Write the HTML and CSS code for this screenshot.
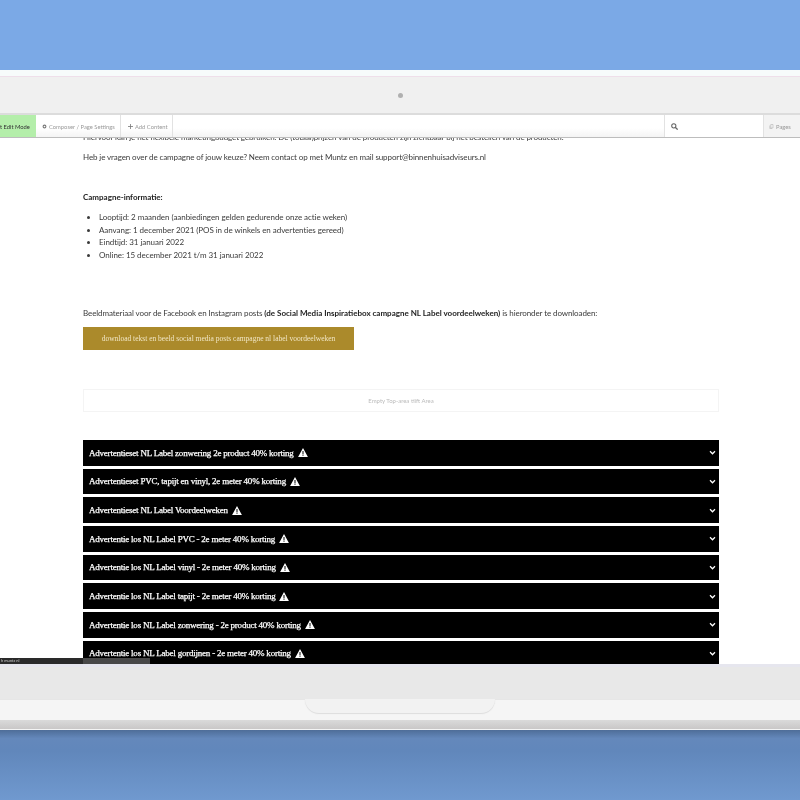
FILE: index.html
```html
<!DOCTYPE html>
<html lang="nl">
<head>
    <meta charset="UTF-8">
    <meta name="viewport" content="width=device-width, initial-scale=1.0">
    <title>Campagne NL Label</title>
    <link rel="stylesheet" href="styles.css">
</head>
<body>
    <svg class="icon-defs" aria-hidden="true">
        <symbol id="warn" viewBox="0 0 12 11"><path fill-rule="evenodd" d="M6 0l6 11H0zM5.400 3.800v3.700h1.200V3.800zM5.400 8.200v1.300h1.200V8.200z" fill="#fff"/></symbol>
        <symbol id="chev" viewBox="0 0 8 6"><path d="M1 1.500l3 3 3-3" fill="none" stroke="#fff" stroke-width="1.500"/></symbol>
    </svg>

    <div class="sky-top"></div>

    <div class="laptop-lid">
        <div class="lid-line"></div>
        <div class="camera-bar"><span class="camera"></span></div>
    </div>

    <div class="screen">
        <div class="toolbar">
            <div class="tool tool-edit">t Edit Mode</div>
            <div class="tool tool-composer">
                <svg class="tool-icon" viewBox="0 0 10 10"><circle cx="5" cy="5" r="2.800" fill="none" stroke="#777" stroke-width="2.200"/></svg>
                Composer / Page Settings
            </div>
            <div class="tool tool-add">
                <svg class="tool-icon" viewBox="0 0 10 10"><path d="M5 0v10M0 5h10" stroke="#777" stroke-width="1.600"/></svg>
                Add Content
            </div>
            <div class="tool-space"></div>
            <div class="tool-search">
                <svg class="search-icon" viewBox="0 0 10 10"><circle cx="4" cy="4" r="3" fill="none" stroke="#666" stroke-width="1.500"/><path d="M6 6l3.500 3.500" stroke="#666" stroke-width="1.800"/></svg>
            </div>
            <div class="tool tool-pages">
                <svg class="tool-icon" viewBox="0 0 10 10"><path d="M3.500 1h4.500v7H3.500zM1.500 3v6h4.500" fill="none" stroke="#aaa" stroke-width="1"/></svg>
                Pages
            </div>
        </div>

        <div class="page">
            <div class="page-inner">
                <p class="intro">Hiervoor kan je het flexibele marketingbudget gebruiken. De (totaal)prijzen van de producten zijn zichtbaar bij het bestellen van de producten.</p>
                <p class="intro">Heb je vragen over de campagne of jouw keuze? Neem contact op met Muntz en mail support@binnenhuisadviseurs.nl</p>

                <p class="info-title">Campagne-informatie:</p>
                <ul class="info-list">
                    <li>Looptijd: 2 maanden (aanbiedingen gelden gedurende onze actie weken)</li>
                    <li>Aanvang: 1 december 2021 (POS in de winkels en advertenties gereed)</li>
                    <li>Eindtijd: 31 januari 2022</li>
                    <li>Online: 15 december 2021 t/m 31 januari 2022</li>
                </ul>

                <p class="material">Beeldmateriaal voor de Facebook en Instagram posts <strong>(de Social Media Inspiratiebox campagne NL Label voordeelweken)</strong> is hieronder te downloaden:</p>
                <a class="download" href="#">download tekst en beeld social media posts campagne nl label voordeelweken</a>

                <div class="empty-area">Empty Top-area tiift Area</div>

                <div class="accordion">
                    <div class="acc-row"><span>Advertentieset NL Label zonwering 2e product 40% korting</span><svg class="warn"><use href="#warn"/></svg><svg class="chev"><use href="#chev"/></svg></div>
                    <div class="acc-row"><span>Advertentieset PVC, tapijt en vinyl, 2e meter 40% korting</span><svg class="warn"><use href="#warn"/></svg><svg class="chev"><use href="#chev"/></svg></div>
                    <div class="acc-row"><span>Advertentieset NL Label Voordeelweken</span><svg class="warn"><use href="#warn"/></svg><svg class="chev"><use href="#chev"/></svg></div>
                    <div class="acc-row"><span>Advertentie los NL Label PVC - 2e meter 40% korting</span><svg class="warn"><use href="#warn"/></svg><svg class="chev"><use href="#chev"/></svg></div>
                    <div class="acc-row"><span>Advertentie los NL Label vinyl - 2e meter 40% korting</span><svg class="warn"><use href="#warn"/></svg><svg class="chev"><use href="#chev"/></svg></div>
                    <div class="acc-row"><span>Advertentie los NL Label tapijt - 2e meter 40% korting</span><svg class="warn"><use href="#warn"/></svg><svg class="chev"><use href="#chev"/></svg></div>
                    <div class="acc-row"><span>Advertentie los NL Label zonwering - 2e product 40% korting</span><svg class="warn"><use href="#warn"/></svg><svg class="chev"><use href="#chev"/></svg></div>
                    <div class="acc-row"><span>Advertentie los NL Label gordijnen - 2e meter 40% korting</span><svg class="warn"><use href="#warn"/></svg><svg class="chev"><use href="#chev"/></svg></div>
                </div>
            </div>
            <div class="status-strip"><span class="status-url">h muntz nl</span></div>
        </div>
    </div>

    <div class="laptop-base">
        <div class="base-top"></div>
        <div class="base-lip"><div class="notch"></div></div>
        <div class="base-edge"></div>
    </div>
    <div class="sky-bottom"></div>
</body>
</html>
```

FILE: styles.css
```css
html, body {
    margin: 0;
    padding: 0;
}

body {
    width: 800px;
    height: 800px;
    overflow: hidden;
    display: flex;
    flex-direction: column;
    font-family: 'Lato', sans-serif;
    background: #6d93c7;
}

.icon-defs {
    display: none;
}

.sky-top {
    height: 70px;
    flex-shrink: 0;
    background: #7ba9e6;
}

.laptop-lid {
    height: 45px;
    flex-shrink: 0;
    background: #f0f0f0;
}

.lid-line {
    height: 7px;
    background: #f7fbfb;
    border-bottom: 1px solid #efdfea;
    box-sizing: border-box;
}

.camera-bar {
    height: 38px;
    border-bottom: 2px solid #dcdcdc;
    box-sizing: border-box;
    display: flex;
    justify-content: center;
    align-items: center;
}

.camera {
    width: 5px;
    height: 5px;
    border-radius: 50%;
    background: #b0b0b0;
}

.screen {
    height: 549px;
    flex-shrink: 0;
    display: flex;
    flex-direction: column;
    background: #fff;
    filter: blur(0.35px);
}

.toolbar {
    height: 23px;
    box-sizing: border-box;
    display: flex;
    flex-shrink: 0;
    background: linear-gradient(#fff 60%, #f4f4f4);
    border-bottom: 1px solid #bdbdbd;
    font-size: 5.800px;
    color: #999;
    position: relative;
    z-index: 2;
}

.tool {
    display: flex;
    align-items: center;
    gap: 2px;
    box-sizing: border-box;
    border-right: 1px solid #e2e2e2;
}

.tool-edit {
    width: 36px;
    background: #b4eeaa;
    color: #333;
    border-right: none;
}

.tool-composer {
    width: 85px;
    padding-left: 6px;
}

.tool-add {
    width: 52px;
    padding-left: 7px;
}

.tool-icon {
    width: 5px;
    height: 5px;
}

.tool-space {
    flex: 1;
}

.tool-search {
    width: 99px;
    border-left: 1px solid #e2e2e2;
    display: flex;
    align-items: center;
    padding-left: 6px;
    box-sizing: border-box;
    background: #fff;
}

.search-icon {
    width: 7px;
    height: 7px;
}

.tool-pages {
    width: 37px;
    padding-left: 5px;
    background: #f3f3f3;
    border-left: 1px solid #e2e2e2;
    border-right: none;
}

.page {
    flex: 1;
    position: relative;
    overflow: hidden;
    font-size: 8px;
    color: #3a3a3a;
}

.page-inner {
    padding: 0 81px 0 83px;
    margin-top: -7px;
}

.intro {
    margin: 0 0 7px;
    line-height: 13px;
    white-space: nowrap;
    letter-spacing: -0.100px;
}

.info-title {
    margin: 27px 0 0;
    line-height: 13px;
    font-weight: 700;
    color: #222;
}

.info-list {
    margin: 7px 0 0;
    padding: 0 0 0 16px;
    line-height: 12.700px;
    letter-spacing: -0.050px;
}

.material {
    margin: 45px 0 0;
    line-height: 13px;
    white-space: nowrap;
    letter-spacing: -0.100px;
}

.material strong {
    color: #222;
    letter-spacing: 0;
}

.download {
    display: block;
    width: 271px;
    height: 23px;
    margin-top: 7px;
    background: #ab8a2b;
    color: #f1e6c4;
    font-family: 'Liberation Serif', serif;
    font-size: 7.500px;
    line-height: 23px;
    text-align: center;
    text-decoration: none;
}

.empty-area {
    height: 21px;
    margin-top: 39px;
    border: 1px solid #f4f4f4;
    color: #bbb;
    font-size: 6px;
    line-height: 21px;
    text-align: center;
}

.accordion {
    margin-top: 28px;
    display: flex;
    flex-direction: column;
    gap: 3px;
}

.acc-row {
    height: 25.700px;
    flex-shrink: 0;
    display: flex;
    align-items: center;
    padding: 0 3px 0 6px;
    background: #000;
    color: #fff;
    font-family: 'Liberation Serif', serif;
    font-size: 9px;
    letter-spacing: -0.220px;
    -webkit-text-stroke: 0.250px #fff;
}

.warn {
    width: 10px;
    height: 9px;
    margin-left: 4px;
}

.chev {
    width: 7px;
    height: 5px;
    margin-left: auto;
}

.status-strip {
    position: absolute;
    left: 0;
    bottom: 0;
    width: 150px;
    height: 6px;
    background: linear-gradient(90deg, #2a2a2a 83px, #484848 83px);
    overflow: hidden;
}

.status-url {
    display: block;
    color: #ccc;
    font-size: 4px;
    line-height: 6px;
    padding-left: 1px;
}

.laptop-base {
    height: 66px;
    flex-shrink: 0;
    display: flex;
    flex-direction: column;
}

.base-top {
    height: 35px;
    background: #e8e8e8;
    border-top: 3px solid #e6e6ee;
    box-sizing: border-box;
}

.base-lip {
    height: 21px;
    background: #f5f5f5;
    border-top: 1px solid #e6e6e6;
    box-sizing: border-box;
    display: flex;
    justify-content: center;
}

.notch {
    width: 190px;
    height: 14px;
    margin-top: -1px;
    background: #f2f2f2;
    border-radius: 0 0 14px 14px;
    box-shadow: 0 1px 1px #ddd;
}

.base-edge {
    height: 10px;
    background: linear-gradient(#dadada, #c9c7c7);
    border-bottom: 1px solid #f4f4f4;
    box-sizing: border-box;
}

.sky-bottom {
    flex: 1;
    background: linear-gradient(#4e6d98, #6488bb 12%, #6187bb 30%, #7099cf);
}
```
